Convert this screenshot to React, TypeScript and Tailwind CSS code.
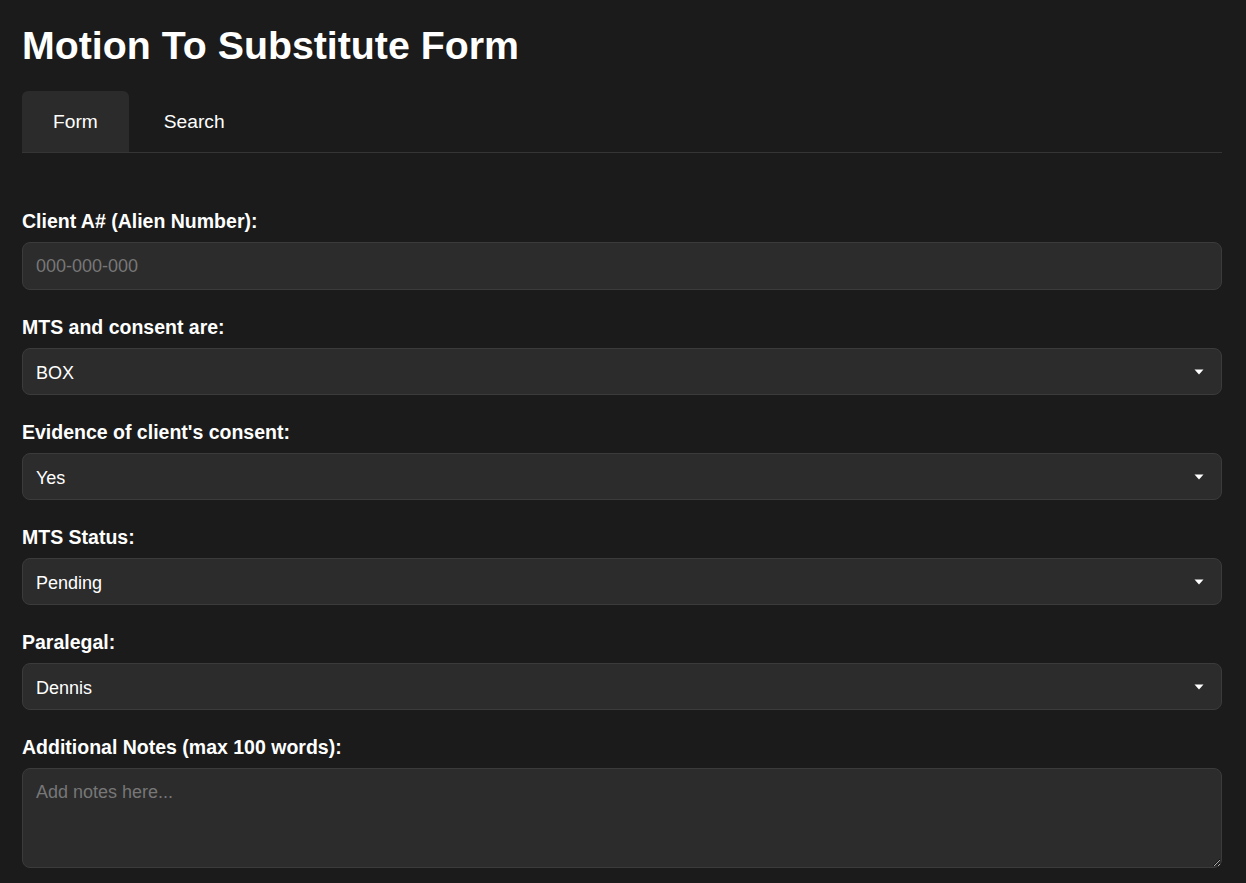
import { useState } from 'react'

const fieldCls =
  'w-full rounded-[8px] border border-[#3b3b3b] bg-[#2c2c2c] px-[13px] text-[18px] text-white placeholder:text-[#777777] outline-none'

function Label({ children }: { children: React.ReactNode }) {
  return <label className="block text-[19.5px] leading-[22px] font-bold text-white mb-[10px]">{children}</label>
}

function Select({ value, options }: { value: string; options: string[] }) {
  const [v, setV] = useState(value)
  return (
    <div className="relative">
      <select value={v} onChange={(e) => setV(e.target.value)} className={fieldCls + ' block appearance-none h-[47px] pt-[4px] pr-10'}>
        {options.map((o) => (
          <option key={o} value={o}>{o}</option>
        ))}
      </select>
      <svg className="pointer-events-none absolute right-[18px] top-1/2 -translate-y-1/2" width="10" height="6" viewBox="0 0 10 6">
        <path d="M0.5 0.5h9L5 5.5z" fill="#ffffff" />
      </svg>
    </div>
  )
}

export default function App() {
  const [tab, setTab] = useState<'form' | 'search'>('form')

  return (
    <div className="min-h-screen bg-[#1b1b1b] text-white pl-[22px] pr-[24px] pt-[23px] pb-4" style={{ fontFamily: '"Liberation Sans", Arial, sans-serif' }}>
      <h1 className="text-[39.3px] leading-[45px] font-bold">Motion To Substitute Form</h1>

      <div className="mt-[23px] flex border-b border-[#353535]">
        <button
          onClick={() => setTab('form')}
          className={'px-[31px] py-[19px] text-[19.2px] leading-[23px] rounded-t-[6px] ' + (tab === 'form' ? 'bg-[#2b2b2b]' : '')}
        >
          Form
        </button>
        <button
          onClick={() => setTab('search')}
          className={'px-[35px] py-[19px] text-[19.2px] leading-[23px] rounded-t-[6px] ' + (tab === 'search' ? 'bg-[#2b2b2b]' : '')}
        >
          Search
        </button>
      </div>

      <form className="mt-[57px] flex flex-col gap-[26px]">
        <div>
          <Label>Client A# (Alien Number):</Label>
          <input className={fieldCls + ' block h-[48px]'} placeholder="000-000-000" />
        </div>
        <div>
          <Label>MTS and consent are:</Label>
          <Select value="BOX" options={['BOX', 'Filed', 'Sent']} />
        </div>
        <div>
          <Label>Evidence of client's consent:</Label>
          <Select value="Yes" options={['Yes', 'No']} />
        </div>
        <div>
          <Label>MTS Status:</Label>
          <Select value="Pending" options={['Pending', 'Granted', 'Denied']} />
        </div>
        <div>
          <Label>Paralegal:</Label>
          <Select value="Dennis" options={['Dennis', 'Maria', 'Kevin']} />
        </div>
        <div>
          <Label>Additional Notes (max 100 words):</Label>
          <textarea
            className="block w-full h-[100px] rounded-[8px] border border-[#3b3b3b] bg-[#2c2c2c] px-[13px] py-[12px] text-[18px] leading-[22px] text-white placeholder:text-[#777777] outline-none resize-y"
            placeholder="Add notes here..."
          />
        </div>
      </form>
    </div>
  )
}
